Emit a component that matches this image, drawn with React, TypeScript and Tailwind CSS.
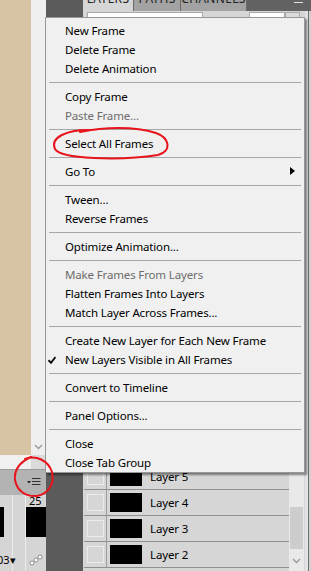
type Item = { label: string; disabled?: boolean; checked?: boolean; submenu?: boolean }

const sections: Item[][] = [
  [{ label: "New Frame" }, { label: "Delete Frame" }, { label: "Delete Animation" }],
  [{ label: "Copy Frame" }, { label: "Paste Frame...", disabled: true }],
  [{ label: "Select All Frames" }],
  [{ label: "Go To", submenu: true }],
  [{ label: "Tween..." }, { label: "Reverse Frames" }],
  [{ label: "Optimize Animation..." }],
  [
    { label: "Make Frames From Layers", disabled: true },
    { label: "Flatten Frames Into Layers" },
    { label: "Match Layer Across Frames..." },
  ],
  [{ label: "Create New Layer for Each New Frame" }, { label: "New Layers Visible in All Frames", checked: true }],
  [{ label: "Convert to Timeline" }],
  [{ label: "Panel Options..." }],
  [{ label: "Close" }, { label: "Close Tab Group" }],
]

function Chevron({ className = "" }: { className?: string }) {
  return (
    <svg width="9" height="6" viewBox="0 0 9 6" className={className}>
      <path d="M1 1 L4.5 4.5 L8 1" fill="none" stroke="#9a9a9a" strokeWidth="1.4" />
    </svg>
  )
}

function FlyoutMenu() {
  return (
    <div className="absolute left-[45px] top-[17px] w-[260px] h-[456px] bg-[#f0f0f0] border border-[#979797] shadow-[2px_2px_2px_rgba(0,0,0,0.45)] pt-[3px]">
      {sections.map((sec, i) => (
        <div key={i}>
          {i > 0 && <div className="mx-[3px] my-[4px] h-px bg-[#a6a6a6]" />}
          {sec.map((it) => (
            <div
              key={it.label}
              className={`relative h-[19px] flex items-center pl-[19px] text-[11.5px] tracking-[-0.15px] leading-none ${
                it.disabled ? "text-[#6d6d6d]" : "text-black"
              }`}>
              {it.checked && (
                <svg width="8" height="8" viewBox="0 0 8 8" className="absolute left-[2px] top-[6px]">
                  <path d="M0.5 4.2 L3 6.8 L7.5 1" fill="none" stroke="#000" strokeWidth="1.8" />
                </svg>
              )}
              {it.label}
              {it.submenu && (
                <svg width="5" height="8" viewBox="0 0 5 8" className="absolute right-[9px] top-[5px]">
                  <path d="M0 0 L5 4 L0 8 Z" fill="#000" />
                </svg>
              )}
            </div>
          ))}
        </div>
      ))}
    </div>
  )
}

function LayerRow({ name }: { name: string }) {
  return (
    <div className="h-[26px] flex items-center border-b border-[#8f8f8f] bg-[#d6d6d6]">
      <div className="w-[23px] h-full border-r border-[#9d9d9d] flex items-center justify-center">
        <div className="w-[17px] h-[17px] border border-[#ebebeb]" />
      </div>
      <div className="ml-[3px] w-[32px] h-[19px] bg-black" />
      <span className="ml-[8px] text-[11.5px] tracking-[-0.15px] text-black">{name}</span>
    </div>
  )
}

export default function App() {
  return (
    <div className="relative w-[311px] h-[571px] overflow-hidden flex font-['Noto_Sans',sans-serif] bg-[#d6d6d6]">
      {/* animation panel, left */}
      <div className="w-[46px] flex flex-col">
        <div className="h-[455px] flex">
          <div className="w-[31px] bg-[#d7c4a5]" />
          <div className="flex-1 bg-[#efefef] flex flex-col justify-end items-center pb-[5px]">
            <Chevron />
          </div>
        </div>
        <div className="h-[14px] flex">
          <div className="w-[31px] bg-[#f0f0f0]" />
          <div className="flex-1 bg-[#dadada]" />
        </div>
        <div className="h-[26px] bg-[#b3b3b3] border-t border-[#9a9a9a] flex items-center justify-end pr-[5px]">
          <svg width="14" height="9" viewBox="0 0 14 9">
            <path d="M0 3 L4 3 L2 5.5 Z" fill="#222" />
            <path d="M5 0.5 H13.5 M5 3.5 H13.5 M5 6.5 H13.5" stroke="#333" strokeWidth="1" />
          </svg>
        </div>
        <div className="flex-1 bg-[#d5d5d5] flex">
          <div className="w-[13px] border-r border-[#ececec] flex flex-col">
            <div className="h-[12px]" />
            <div className="h-[30px] w-[4px] bg-black" />
            <div className="flex-1" />
            <div className="text-[11px] leading-none text-black pb-[6px] -ml-[3px] whitespace-nowrap">03▾</div>
          </div>
          <div className="w-[12px]" />
          <div className="flex-1 border-l border-[#ececec] flex flex-col">
            <div className="h-[12px] text-[11px] leading-[12px] text-black pl-[3px]">25</div>
            <div className="h-[30px] bg-black" />
            <div className="flex-1 flex items-end justify-center pb-[5px]">
              <svg width="14" height="12" viewBox="0 0 14 12">
                <circle cx="3" cy="9" r="2" fill="#fff" stroke="#777" strokeWidth="0.8" />
                <circle cx="7" cy="6" r="2" fill="#fff" stroke="#777" strokeWidth="0.8" />
                <circle cx="11" cy="3" r="2" fill="#fff" stroke="#777" strokeWidth="0.8" />
              </svg>
            </div>
          </div>
        </div>
      </div>

      {/* dark gap */}
      <div className="w-[37px] bg-[#5b5b5b]" />

      {/* layers panel */}
      <div className="flex-1 flex flex-col">
        <div className="h-[11px] overflow-hidden bg-[#626262]">
          <div className="-mt-[13px] h-[24px] flex text-[12px] text-[#222] leading-none tracking-[0.3px]">
            <div className="w-[50px] bg-[#d6d6d6] flex items-center justify-center">LAYERS</div>
            <div className="w-[47px] bg-[#a3a3a3] border-l border-[#6a6a6a] flex items-center justify-center">PATHS</div>
            <div className="w-[67px] bg-[#a3a3a3] border-l border-[#6a6a6a] border-r flex items-center justify-center">CHANNELS</div>
            <div className="flex-1 flex items-center justify-end pr-[7px]">
              <svg width="11" height="10" viewBox="0 0 11 10">
                <path d="M1 2.5 H10 M1 5.5 H10 M1 8.5 H10" stroke="#e0e0e0" strokeWidth="1" />
              </svg>
            </div>
          </div>
        </div>
        <div className="flex-1 flex">
          <div className="w-[222px] flex flex-col">
            <div className="h-[453px] flex pt-[1px] pl-[4px]">
              <div className="w-[116px] h-[16px] bg-white border border-[#a8a8a8]" />
              <div className="w-[46px]" />
              <div className="w-[36px] h-[16px] bg-white border border-[#a8a8a8]" />
              <div className="w-[15px] h-[16px] bg-[#dcdcdc] border border-[#a8a8a8]" />
            </div>
            <div className="flex-1 flex pl-px">
              <div className="w-[205px] flex flex-col">
                <LayerRow name="Layer 5" />
                <LayerRow name="Layer 4" />
                <LayerRow name="Layer 3" />
                <LayerRow name="Layer 2" />
              </div>
              <div className="w-[15px] bg-[#e9e9e9] flex flex-col">
                <div className="h-[43px]" />
                <div className="h-[42px] mx-px bg-[#cdcdcd]" />
                <div className="flex-1 flex items-start justify-center pt-[9px]">
                  <Chevron />
                </div>
              </div>
            </div>
          </div>
          <div className="flex-1 flex">
            <div className="w-[3px] bg-[#e2e2e2]" />
            <div className="w-px bg-[#6f6f6f]" />
            <div className="flex-1 bg-[#d0d0d0]" />
          </div>
        </div>
      </div>

      <FlyoutMenu />

      {/* red annotation marks */}
      <svg className="absolute inset-0 pointer-events-none" width="311" height="571" viewBox="0 0 311 571">
        <path
          d="M92 130 C66 129 50 138 55 149 C60 159 120 161 158 155 C172 151 170 138 156 133 C134 126 104 127 80 132"
          fill="none"
          stroke="#e8141b"
          strokeWidth="2"
          strokeLinecap="round"
        />
        <path
          d="M25 459 C36 455 48 460 52 472 C55 484 48 494 37 496 C26 497 17 491 15 480 C14 470 20 462 31 457"
          fill="none"
          stroke="#e8141b"
          strokeWidth="2"
          strokeLinecap="round"
        />
      </svg>
    </div>
  )
}
